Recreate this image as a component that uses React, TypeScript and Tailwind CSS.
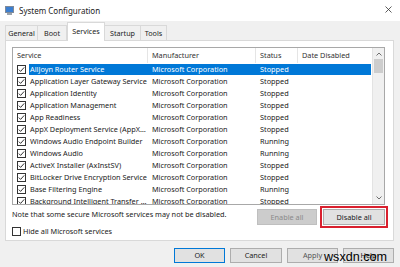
import React from 'react'

const rows = [
    { name: 'AllJoyn Router Service', status: 'Stopped', selected: true },
    { name: 'Application Layer Gateway Service', status: 'Stopped' },
    { name: 'Application Identity', status: 'Stopped' },
    { name: 'Application Management', status: 'Stopped' },
    { name: 'App Readiness', status: 'Stopped' },
    { name: 'AppX Deployment Service (AppX…', status: 'Stopped' },
    { name: 'Windows Audio Endpoint Builder', status: 'Running' },
    { name: 'Windows Audio', status: 'Running' },
    { name: 'ActiveX Installer (AxInstSV)', status: 'Stopped' },
    { name: 'BitLocker Drive Encryption Service', status: 'Stopped' },
    { name: 'Base Filtering Engine', status: 'Running' },
    { name: 'Background Intelligent Transfer …', status: 'Stopped' },
]

function Check({ checked }: { checked?: boolean }) {
    return (
        <svg width="9" height="9" viewBox="0 0 9 9" className="shrink-0">
            <rect x="0.5" y="0.5" width="8" height="8" fill="white" stroke="#333" strokeWidth="1" />
            {checked && <path d="M1.8 4.6 L3.6 6.4 L7.2 2.4" fill="none" stroke="#333" strokeWidth="1" />}
        </svg>
    )
}

export default function App() {
    return (
        <div className="relative w-[400px] h-[267px] overflow-hidden bg-[#f0f0f0] font-['Noto_Sans',sans-serif] text-[#1a1a1a]">
            {/* Title bar */}
            <div className="flex items-center h-[21px] bg-white pl-[5px] pr-[8px]">
                <svg width="9" height="9" viewBox="0 0 9 9" className="shrink-0">
                    <rect x="0" y="0" width="9" height="7" fill="#7f8a99" />
                    <rect x="1" y="1" width="7" height="5" fill="#3b7fd1" />
                    <rect x="2" y="7" width="5" height="2" fill="#9aa3ad" />
                </svg>
                <span className="ml-[5px] text-[8px] text-[#222]">System Configuration</span>
                <svg width="7" height="7" viewBox="0 0 7 7" className="ml-auto mt-[-3px]">
                    <path d="M0.5 0.5 L6.5 6.5 M6.5 0.5 L0.5 6.5" stroke="#333" strokeWidth="0.8" />
                </svg>
            </div>

            {/* Tabs */}
            <div className="flex items-end h-[19px] pl-[5px] text-[7.2px] text-[#222]">
                <div className="flex items-center justify-center w-[33px] h-[15px] border border-b-0 border-[#d9d9d9]">General</div>
                <div className="flex items-center justify-center w-[29px] h-[15px] border border-b-0 border-l-0 border-[#d9d9d9]">Boot</div>
                <div className="relative z-10 flex items-center justify-center w-[38px] h-[19px] -mb-px pb-[2px] bg-white border border-b-0 border-[#d9d9d9]">Services</div>
                <div className="flex items-center justify-center w-[36px] h-[15px] border border-b-0 border-l-0 border-[#d9d9d9]">Startup</div>
                <div className="flex items-center justify-center w-[26px] h-[15px] border border-b-0 border-l-0 border-[#d9d9d9]">Tools</div>
            </div>

            {/* Panel */}
            <div className="ml-[5px] w-[389px] h-[201px] bg-white border border-[#d9d9d9] pt-[6px] pl-[6px]">
                {/* List box */}
                <div className="flex w-[373px] h-[158px] border border-[#a8a8a8] text-[7.3px]">
                    <div className="flex-1 flex flex-col overflow-hidden">
                        <div className="flex h-[15px] shrink-0 items-center text-[#333]">
                            <div className="w-[135px] h-full flex items-center pl-[4px] border-r border-[#e5e5e5]">Service</div>
                            <div className="w-[108px] h-full flex items-center pl-[4px] border-r border-[#e5e5e5]">Manufacturer</div>
                            <div className="w-[42px] h-full flex items-center pl-[4px] border-r border-[#e5e5e5]">Status</div>
                            <div className="flex-1 h-full flex items-center pl-[4px]">Date Disabled</div>
                        </div>
                        {rows.map((r) => (
                            <div key={r.name} className="flex h-[12px] shrink-0 items-center">
                                <div className="w-[16px] flex items-center pl-[4px]">
                                    <Check checked />
                                </div>
                                <div className={`flex flex-1 h-[11px] items-center mr-[1px] ${r.selected ? 'bg-[#0078d7] text-white' : ''}`}>
                                    <div className="w-[119px] pl-[1px] whitespace-nowrap overflow-hidden">{r.name}</div>
                                    <div className="w-[108px] pl-[4px] whitespace-nowrap">Microsoft Corporation</div>
                                    <div className="w-[42px] pl-[4px]">{r.status}</div>
                                </div>
                            </div>
                        ))}
                    </div>
                    {/* Scrollbar */}
                    <div className="flex flex-col items-center w-[12px] bg-[#f0f0f0] border-l border-[#e3e3e3]">
                        <svg width="6" height="4" viewBox="0 0 6 4" className="mt-[4px]">
                            <path d="M0.5 3.5 L3 1 L5.5 3.5" fill="none" stroke="#606060" strokeWidth="0.9" />
                        </svg>
                        <div className="mt-[3px] w-[9px] h-[14px] bg-[#cdcdcd]" />
                        <svg width="6" height="4" viewBox="0 0 6 4" className="mt-auto mb-[4px]">
                            <path d="M0.5 0.5 L3 3 L5.5 0.5" fill="none" stroke="#606060" strokeWidth="0.9" />
                        </svg>
                    </div>
                </div>

                {/* Note + buttons */}
                <div className="flex items-center w-[373px] mt-[4px] text-[7.3px]">
                    <span className="text-[#222] -mt-[5px]">Note that some secure Microsoft services may not be disabled.</span>
                    <div className="ml-auto flex gap-[6px]">
                        <div className="flex items-center justify-center w-[60px] h-[16px] bg-[#cccccc] border border-[#bfbfbf] text-[#8a8a8a]">Enable all</div>
                        <div className="relative flex items-center justify-center w-[62px] h-[16px] bg-[#e1e1e1] border border-[#adadad] text-[#222]">
                            Disable all
                            <div className="absolute -inset-[4px] border-2 border-[#d9202e]" />
                        </div>
                    </div>
                </div>

                {/* Hide checkbox */}
                <div className="flex items-center mt-[1px] text-[7.3px] text-[#222]">
                    <Check />
                    <span className="ml-[2px]">Hide all Microsoft services</span>
                </div>
            </div>

            {/* Bottom buttons */}
            <div className="flex justify-end gap-[5px] pr-[6px] mt-[7px] text-[7.3px] text-[#222]">
                <div className="flex items-center justify-center w-[51px] h-[15px] bg-[#e1e1e1] border border-[#0078d7]">OK</div>
                <div className="flex items-center justify-center w-[52px] h-[15px] bg-[#e1e1e1] border border-[#adadad]">Cancel</div>
                <div className="flex items-center justify-center w-[51px] h-[15px] bg-[#e1e1e1] border border-[#adadad] text-[#555]">Apply</div>
                <div className="flex items-center justify-center w-[51px] h-[15px] bg-[#e1e1e1] border border-[#adadad]">Help</div>
            </div>

            {/* Watermark */}
            <div className="absolute left-[324px] top-[248px] font-['Liberation_Sans',sans-serif] text-[12.6px] text-black">wsxdn.com</div>
        </div>
    )
}
